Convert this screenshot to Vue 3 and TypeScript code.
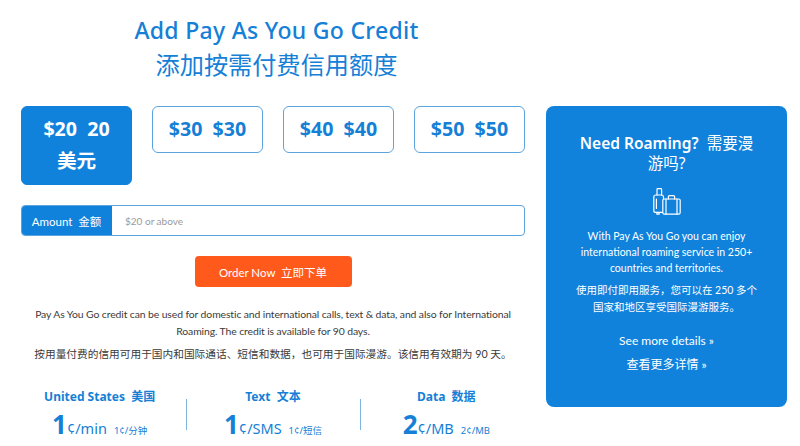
<script setup lang="ts">
const amounts = [
  { label: '$20', zh: '20 美元', active: true },
  { label: '$30', zh: '$30', active: false },
  { label: '$40', zh: '$40', active: false },
  { label: '$50', zh: '$50', active: false },
]
const stats = [
  { title: 'United States', zh: '美国', big: '1', unit: '¢/min', small: '1¢/分钟' },
  { title: 'Text', zh: '文本', big: '1', unit: '¢/SMS', small: '1¢/短信' },
  { title: 'Data', zh: '数据', big: '2', unit: '¢/MB', small: '2¢/MB' },
]
</script>

<template>
  <div class="page">
    <main class="left">
      <header class="head">
        <h1>Add Pay As You Go Credit</h1>
        <h2>添加按需付费信用额度</h2>
      </header>

      <div class="amounts">
        <button v-for="a in amounts" :key="a.label" class="amount" :class="{ active: a.active }">
          {{ a.label }}&nbsp; {{ a.zh }}
        </button>
      </div>

      <div class="field">
        <span class="prefix">Amount&nbsp; 金额</span>
        <span class="placeholder">$20 or above</span>
      </div>

      <button class="order">Order Now&nbsp; 立即下单</button>

      <p class="desc">Pay As You Go credit can be used for domestic and international calls, text &amp; data, and also for International Roaming. The credit is available for 90 days.</p>
      <p class="desc zh">按用量付费的信用可用于国内和国际通话、短信和数据，也可用于国际漫游。该信用有效期为 90 天。</p>

      <div class="stats">
        <div v-for="s in stats" :key="s.title" class="stat">
          <div class="stat-title">{{ s.title }}&nbsp; {{ s.zh }}</div>
          <div class="stat-value"><b>{{ s.big }}</b><span class="unit">{{ s.unit }}</span><span class="small">{{ s.small }}</span></div>
        </div>
      </div>
    </main>

    <aside class="card">
      <h3>Need Roaming?&nbsp; <span class="thin">需要漫</span><span class="thin">游吗?</span></h3>
      <svg class="icon" viewBox="0 0 28 27" fill="none" stroke="#fff" stroke-width="1.2" stroke-linejoin="round" stroke-linecap="round">
        <path d="M4 7V1.4a.7.7 0 0 1 .7-.7h3.2a.7.7 0 0 1 .7.7V7" />
        <path d="M10.5 10.5V9a2 2 0 0 0-2-2H2.8a2 2 0 0 0-2 2v13.4a2 2 0 0 0 2 2h6.5" />
        <path d="M3.4 11v9.5" />
        <path d="M3.9 24.4v1.8h2.2v-1.8" />
        <rect x="9.8" y="11" width="17.4" height="15.2" rx="1.6" />
        <path d="M13 11v15.2M24 11v15.2" />
        <path d="M15.4 11V8.6a1 1 0 0 1 1-1h4.2a1 1 0 0 1 1 1V11" />
      </svg>
      <p class="card-text">With Pay As You Go you can enjoy international roaming service in 250+ countries and territories.</p>
      <p class="card-text zh">使用即付即用服务，您可以在 250 多个国家和地区享受国际漫游服务。</p>
      <a class="more">See more details »</a>
      <a class="more zh">查看更多详情 »</a>
    </aside>
  </div>
</template>

<style scoped>
.page {
  width: 800px;
  height: 446px;
  overflow: hidden;
  box-sizing: border-box;
  padding: 0 13px 0 21px;
  display: flex;
  gap: 21px;
  align-items: flex-start;
  background: #fff;
  font-family: Lato, "Noto Sans CJK SC", sans-serif;
  color: #333;
}
.left {
  width: 504px;
  flex: none;
}
.head {
  text-align: center;
  color: #1580d6;
  padding: 15px 0 0 7px;
  height: 106px;
  box-sizing: border-box;
}
h1 {
  margin: 0;
  font-family: "Noto Sans", sans-serif;
  font-size: 23px;
  line-height: 31px;
  font-weight: 500;
  letter-spacing: 0.3px;
}
h2 {
  margin: 0;
  font-size: 24.2px;
  line-height: 35px;
  font-weight: 400;
  font-family: "Noto Sans CJK SC", sans-serif;
}
.amounts {
  display: grid;
  grid-template-columns: repeat(4, 1fr);
  gap: 20px;
  align-items: start;
}
.amount {
  box-sizing: border-box;
  font-family: "Noto Sans", "Noto Sans CJK SC", sans-serif;
  font-size: 19.6px;
  font-weight: 700;
  line-height: 32px;
  padding: 6px 12px 7px;
  background: #fff;
  color: #1580d6;
  border: 1px solid #5ba4dd;
  border-radius: 6px;
  text-align: center;
}
.amount.active {
  background: #1082dc;
  border-color: #1082dc;
  color: #fff;
}
.field {
  margin-top: 20px;
  height: 31px;
  display: flex;
  box-sizing: border-box;
  border: 1px solid #5ba4dd;
  border-radius: 4px;
  overflow: hidden;
  background: #fff;
}
.prefix {
  width: 91px;
  margin: -1px 0 -1px -1px;
  background: #1082dc;
  color: #fff;
  font-size: 11.5px;
  display: flex;
  align-items: center;
  justify-content: center;
}
.placeholder {
  padding-left: 13px;
  font-size: 10px;
  color: #9a9a9a;
  display: flex;
  align-items: center;
}
.order {
  display: block;
  margin: 20px auto 0;
  width: 157px;
  height: 31px;
  border: none;
  border-radius: 4px;
  background: #ff5a1c;
  color: #fff;
  font-family: Lato, "Noto Sans CJK SC", sans-serif;
  font-size: 11.5px;
  padding: 0;
}
.desc {
  margin: 19px 0 0;
  font-size: 10.4px;
  letter-spacing: -0.1px;
  line-height: 17px;
  text-align: center;
  color: #3a3a3a;
}
.desc.zh {
  margin-top: 5px;
  font-size: 10.7px;
  letter-spacing: 0;
}
.stats {
  display: flex;
  margin: 26px -8px 0;
}
.stat {
  flex: 1;
  text-align: center;
  color: #1580d6;
  position: relative;
}
.stat + .stat::before {
  content: "";
  position: absolute;
  left: 0;
  top: 11px;
  height: 31px;
  width: 1px;
  background: #7fb4de;
}
.stat-title {
  font-family: "Noto Sans", "Noto Sans CJK SC", sans-serif;
  font-size: 12px;
  line-height: 17px;
  font-weight: 700;
}
.stat-value {
  font-family: "Noto Sans", "Noto Sans CJK SC", sans-serif;
  margin-top: 4px;
  line-height: 30px;
  white-space: nowrap;
}
.stat-value b {
  font-size: 26px;
  font-weight: 700;
}
.unit {
  font-size: 14.5px;
  font-weight: 400;
}
.small {
  font-size: 9.5px;
  margin-left: 7px;
}
.card {
  width: 241px;
  height: 301px;
  margin-top: 106px;
  flex: none;
  box-sizing: border-box;
  padding: 27px 30px 0;
  background: #1082dc;
  border-radius: 8px;
  color: #fff;
  text-align: center;
}
h3 {
  margin: 0;
  font-family: "Noto Sans", "Noto Sans CJK SC", sans-serif;
  font-size: 15.5px;
  line-height: 20px;
  font-weight: 600;
}
.thin {
  font-weight: 400;
}
.icon {
  display: block;
  width: 28px;
  height: 27px;
  margin: 15px auto 0;
}
.card-text {
  margin: 13px -3px 0;
  font-size: 10.5px;
  line-height: 16px;
}
.card-text.zh {
  margin-top: 6px;
  line-height: 17px;
}
.more {
  display: block;
  font-size: 12px;
  line-height: 16px;
  margin-top: 8px;
}
.card-text.zh + .more {
  margin-top: 17px;
}
</style>
